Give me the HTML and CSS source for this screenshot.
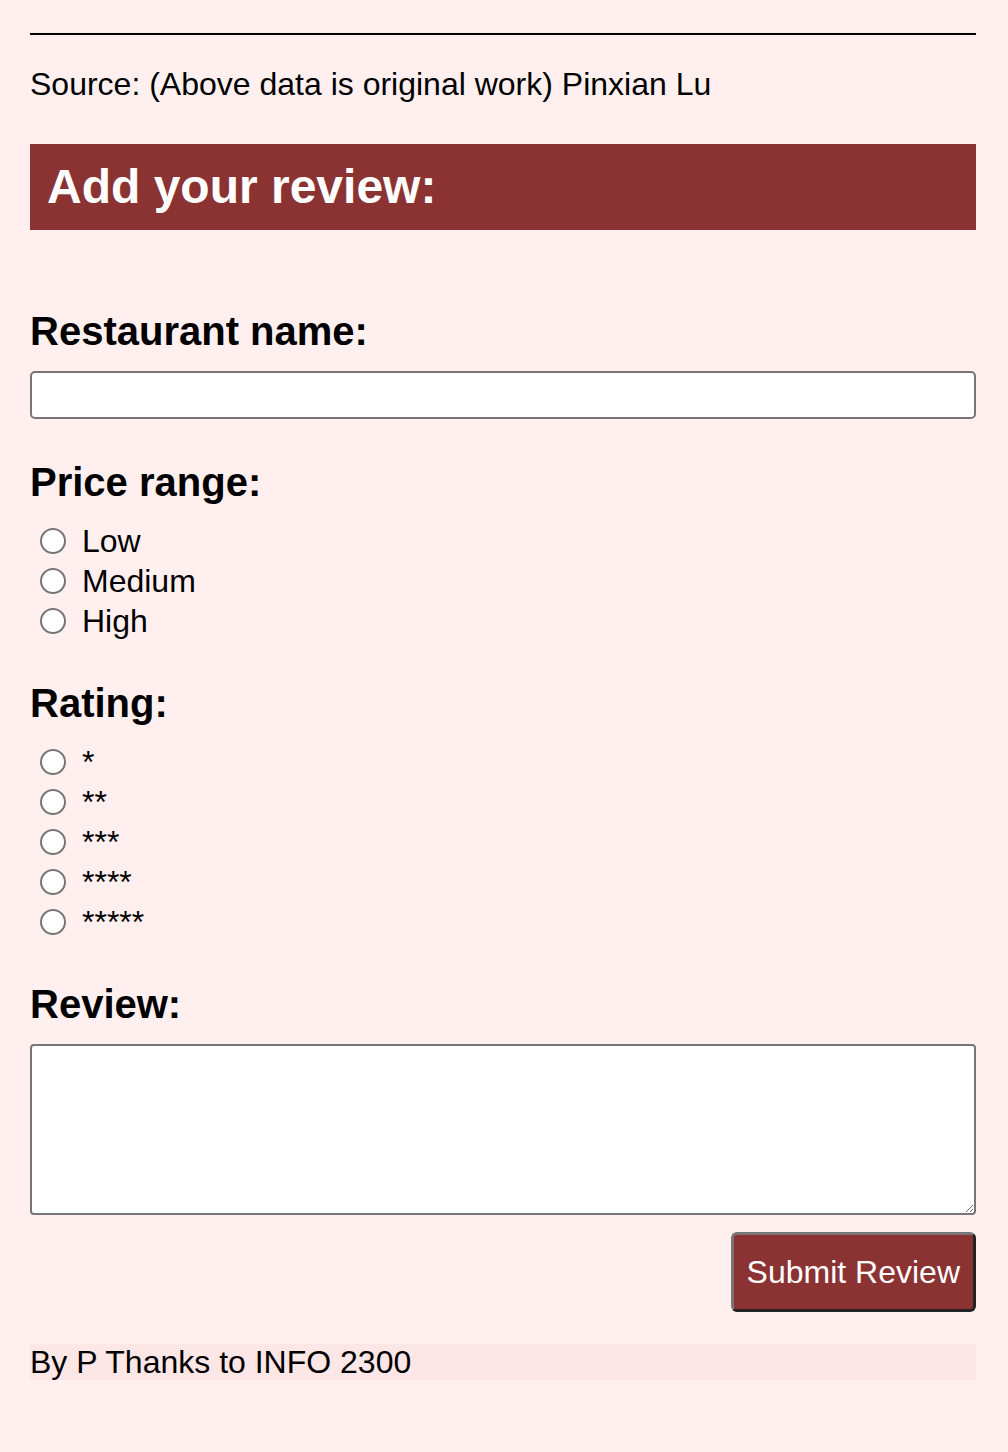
FILE: index.html
```html
<!DOCTYPE html>
<html>
<head>
    <title>Add your review</title>
    <link rel="stylesheet" href="styles.css">
</head>
<body>
    <hr class="rule">
    <p class="source">Source: (Above data is original work) Pinxian Lu</p>

    <h2 class="form-title">Add your review:</h2>

    <form class="review-form">
        <label class="field-label label-first" for="restaurant">Restaurant name:</label>
        <input class="text-field" type="text" id="restaurant" name="restaurant">

        <p class="field-label label-group">Price range:</p>
        <div class="options">
            <label class="option"><input type="radio" name="price" value="low">Low</label>
            <label class="option"><input type="radio" name="price" value="medium">Medium</label>
            <label class="option"><input type="radio" name="price" value="high">High</label>
        </div>

        <p class="field-label label-group">Rating:</p>
        <div class="options">
            <label class="option"><input type="radio" name="rating" value="1">*</label>
            <label class="option"><input type="radio" name="rating" value="2">**</label>
            <label class="option"><input type="radio" name="rating" value="3">***</label>
            <label class="option"><input type="radio" name="rating" value="4">****</label>
            <label class="option"><input type="radio" name="rating" value="5">*****</label>
        </div>

        <label class="field-label label-group label-review" for="review">Review:</label>
        <textarea class="review-box" id="review" name="review"></textarea>

        <button class="submit-btn" type="button">Submit Review</button>
    </form>

    <footer class="footer">By P Thanks to INFO 2300</footer>
</body>
</html>
```

FILE: styles.css
```css
body {
    font-family: "Liberation Sans", Arial, sans-serif;
    background-color: #fff0ef;
    color: #000;
    margin: 0 32px 0 30px;
    padding: 0;
}

.rule {
    height: 0;
    margin: 33px 0 0;
    border: 0;
    border-top: 2px solid #000;
}

.source {
    font-size: 32px;
    line-height: 37px;
    margin: 31px 0 0;
}

.form-title {
    background-color: #8b3233;
    color: white;
    font-size: 48px;
    line-height: 56px;
    padding: 15px 17px;
    margin: 41px 0 0;
}

.review-form {
    display: flex;
    flex-direction: column;
}

.field-label {
    display: block;
    font-size: 40px;
    font-weight: bold;
    line-height: 46px;
    margin: 0 0 17px;
}

.label-first {
    margin-top: 78px;
}

.label-group {
    margin-bottom: 16px;
}

.label-review {
    margin-top: 39px;
    margin-bottom: 17px;
}

.text-field {
    box-sizing: border-box;
    height: 48px;
    margin: 0 0 40px;
    border: 2px solid #767676;
    border-radius: 5px;
    background: #fff;
    font-size: 32px;
}

.options {
    display: flex;
    flex-direction: column;
    margin-bottom: 39px;
}

.options + .label-review {
    margin-top: 0;
}

.option {
    display: flex;
    align-items: center;
    height: 40px;
    font-size: 32px;
}

.option input {
    appearance: none;
    -webkit-appearance: none;
    box-sizing: border-box;
    width: 26px;
    height: 26px;
    margin: 0 16px 0 10px;
    border: 2px solid #767676;
    border-radius: 50%;
    background: #fff;
}

.review-box {
    box-sizing: border-box;
    height: 171px;
    margin: 0;
    border: 2px solid #767676;
    border-radius: 4px;
    background: #fff;
    font-size: 32px;
}

.submit-btn {
    align-self: flex-end;
    box-sizing: border-box;
    height: 80px;
    margin-top: 17px;
    padding: 0 13px;
    background-color: #8b3233;
    color: white;
    font-family: "Liberation Sans", Arial, sans-serif;
    font-size: 32px;
    border: 3px solid;
    border-color: #767676 #222 #222 #767676;
    border-radius: 6px;
}

.footer {
    margin-top: 32px;
    background-color: #fde6e6;
    font-size: 32px;
    line-height: 36px;
}
```
